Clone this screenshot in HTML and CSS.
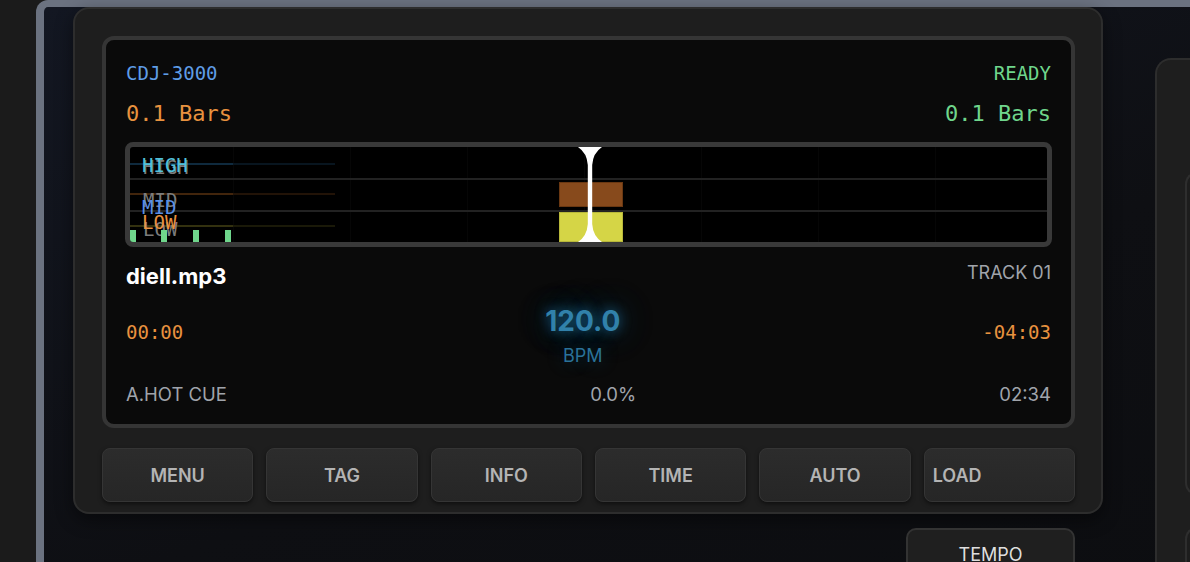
FILE: index.html
```html
<!DOCTYPE html>
<html lang="en">
<head>
<meta charset="utf-8">
<title>CDJ-3000 Deck</title>
<link rel="stylesheet" href="styles.css">
</head>
<body>
<div class="frame">
  <div class="deck-col">
    <div class="deck">
      <div class="screen">
        <div class="row top-row">
          <span class="model">CDJ-3000</span>
          <span class="status">READY</span>
        </div>
        <div class="row bars-row">
          <span class="bars-left">0.1 Bars</span>
          <span class="bars-right">0.1 Bars</span>
        </div>
        <div class="wave">
          <div class="grid"></div>
          <div class="band-line line-a"></div>
          <div class="band-line line-b"></div>
          <div class="trace trace-high"></div>
          <div class="trace trace-mid"></div>
          <div class="trace trace-low"></div>
          <span class="lbl ghost g-high">HIGH</span>
          <span class="lbl ghost g-mid">MID</span>
          <span class="lbl ghost g-low">LOW</span>
          <span class="lbl c-high">HIGH</span>
          <span class="lbl c-mid">MID</span>
          <span class="lbl c-low">LOW</span>
          <div class="marker m1"></div>
          <div class="marker m2"></div>
          <div class="marker m3"></div>
          <div class="marker m4"></div>
          <div class="block block-mid"></div>
          <div class="block block-low"></div>
          <svg class="playhead" width="26" height="95" viewBox="0 0 26 95">
            <path d="M1 0 H25 Q16 6 15.2 18 L15.2 77 Q16 89 25 95 H1 Q10 89 10.8 77 L10.8 18 Q10 6 1 0 Z" fill="#ffffff"/>
          </svg>
        </div>
        <div class="row track-row">
          <span class="track-name">diell.mp3</span>
          <span class="track-no">TRACK 01</span>
        </div>
        <div class="row time-row">
          <span class="elapsed">00:00</span>
          <div class="bpm">
            <div class="bpm-val">120.0</div>
            <div class="bpm-label">BPM</div>
          </div>
          <span class="remain">-04:03</span>
        </div>
        <div class="row info-row">
          <span>A.HOT CUE</span>
          <span>0.0%</span>
          <span>02:34</span>
        </div>
      </div>
      <div class="buttons">
        <button class="btn">MENU</button>
        <button class="btn">TAG</button>
        <button class="btn">INFO</button>
        <button class="btn">TIME</button>
        <button class="btn">AUTO</button>
        <button class="btn btn-left">LOAD</button>
      </div>
    </div>
    <div class="below">
      <div class="tempo">TEMPO</div>
    </div>
  </div>
  <div class="side">
    <div class="side-card card-1"></div>
    <div class="side-card card-2"></div>
  </div>
</div>
</body>
</html>
```
FILE: styles.css
```css
* { box-sizing: border-box; }
html, body { margin: 0; height: 100%; }
body {
  background: #1b1b1b;
  overflow: hidden;
  font-family: Inter, "Liberation Sans", sans-serif;
}
.frame {
  margin-left: 36px;
  width: 1300px;
  height: 620px;
  border-top: 7px solid #6b7280;
  border-left: 8px solid #6b7280;
  border-top-left-radius: 12px;
  background: linear-gradient(160deg, #131722 0%, #0e0f13 55%, #0c0d10 100%);
  display: flex;
  align-items: flex-start;
  padding-left: 29px;
}
.deck-col { width: 1030px; flex: none; }
.deck {
  border: 2px solid #2d2d2d;
  border-radius: 16px;
  background: #1e1e1e;
  padding: 27px 26px 10px 27px;
  box-shadow: 0 6px 18px rgba(0,0,0,0.45);
}
.screen {
  border: 4px solid #353535;
  border-radius: 12px;
  background: #0a0a0a;
  padding: 22px 20px 19px;
}
.row { display: flex; justify-content: space-between; }
.top-row {
  font-family: "DejaVu Sans Mono", "Liberation Mono", monospace;
  font-size: 19px;
  line-height: 22px;
}
.model { color: #5f9de6; }
.status { color: #6fd68c; }
.bars-row {
  margin-top: 17px;
  font-family: "DejaVu Sans Mono", "Liberation Mono", monospace;
  font-size: 22px;
  line-height: 26px;
}
.bars-left { color: #e8923f; }
.bars-right { color: #6fd68c; }

.wave {
  position: relative;
  margin: 15px -1px 0;
  height: 105px;
  border: 5px solid #393939;
  border-radius: 8px;
  background: #000;
  overflow: hidden;
}
.grid {
  position: absolute;
  inset: 0;
  background: repeating-linear-gradient(90deg, transparent 0, transparent 116px, #060606 116px, #060606 117px);
  background-position: -13px 0;
}
.band-line { position: absolute; left: 0; right: 0; height: 2px; background: #222; }
.line-a { top: 31px; }
.line-b { top: 63px; }
.trace { position: absolute; left: 0; width: 205px; height: 2px; }
.trace-high { top: 16px; background: linear-gradient(90deg, #0f2a3e 0, #0f2a3e 103px, #08151f 103px, #08151f 205px); }
.trace-mid { top: 46px; background: linear-gradient(90deg, #42250c 0, #42250c 103px, #221307 103px, #221307 205px); }
.trace-low { top: 78px; background: linear-gradient(90deg, #33310f 0, #33310f 103px, #1a1908 103px, #1a1908 205px); }
.lbl {
  position: absolute;
  left: 12px;
  font-family: "DejaVu Sans Mono", "Liberation Mono", monospace;
  font-size: 19px;
  line-height: 19px;
}
.ghost { color: #7c7c7c; left: 13px; }
.g-high { top: 11px; }
.g-mid { top: 44px; }
.g-low { top: 73px; }
.c-high { top: 9px; color: #52c0da; }
.c-mid { top: 51px; color: #5b8fe6; }
.c-low { top: 66px; color: #e8913f; }
.marker { position: absolute; bottom: 0; width: 6px; height: 12px; background: #6fd68c; }
.m1 { left: 0; }
.m2 { left: 31px; }
.m3 { left: 63px; }
.m4 { left: 95px; }
.block { position: absolute; left: calc(50% - 30px); width: 64px; }
.block-mid { top: 35px; height: 25px; background: #874a1c; box-shadow: inset 0 0 0 1px #6a3812; }
.block-low { top: 65px; height: 30px; background: #d5d546; box-shadow: inset 0 0 0 1px #b8b83a; }
.playhead { position: absolute; top: 0; left: calc(50% - 12px); }

.track-row { margin-top: 16px; align-items: flex-start; }
.track-name { color: #fff; font-weight: 700; font-size: 22px; line-height: 26px; }
.track-no { color: #a0a4ab; font-size: 18px; line-height: 19px; }

.time-row { margin-top: 15px; align-items: flex-start; }
.elapsed, .remain {
  margin-top: 17px;
  font-family: "DejaVu Sans Mono", "Liberation Mono", monospace;
  font-size: 19px;
  line-height: 22px;
  color: #e8923f;
}
.bpm { text-align: center; }
.bpm-val {
  font-weight: 700;
  font-size: 28px;
  line-height: 34px;
  color: #3181aa;
  text-shadow: 0 0 12px rgba(40,150,210,0.6), 0 0 28px rgba(40,150,210,0.45), 0 0 44px rgba(40,150,210,0.3);
}
.bpm-label {
  margin-top: 7px;
  font-size: 18px;
  line-height: 22px;
  color: #2a7299;
  text-shadow: 0 0 18px rgba(40,150,210,0.35);
}
.info-row {
  margin-top: 16px;
  font-size: 18.5px;
  line-height: 22px;
  color: #a0a4ab;
}

.buttons {
  margin-top: 20px;
  display: grid;
  grid-template-columns: repeat(6, 1fr);
  gap: 13px;
}
.btn {
  height: 54px;
  border: 1px solid #353535;
  border-radius: 8px;
  background: linear-gradient(180deg, #2c2c2c, #262626);
  box-shadow: 0 2px 4px rgba(0,0,0,0.5);
  color: #b4b4b4;
  font-family: Inter, "Liberation Sans", sans-serif;
  font-weight: 600;
  font-size: 18px;
  padding: 0;
  text-align: center;
}
.btn-left { text-align: left; padding-left: 8px; }

.below {
  display: flex;
  justify-content: flex-end;
  padding-right: 28px;
  margin-top: 14px;
}
.tempo {
  width: 169px;
  height: 60px;
  border: 2px solid #333;
  border-radius: 10px;
  background: #1f1f1f;
  color: #dedede;
  text-align: center;
  padding-top: 14px;
  font-size: 18px;
  line-height: 22px;
}

.side {
  flex: none;
  margin-left: 52px;
  margin-top: 51px;
  width: 200px;
  height: 620px;
  border: 2px solid #2d2d2d;
  border-right: none;
  border-radius: 16px 0 0 0;
  background: #1e1e1e;
  padding: 112px 0 0 28px;
  display: flex;
  flex-direction: column;
  gap: 32px;
}
.side-card {
  flex: none;
  border: 2px solid #2e2e2e;
  border-right: none;
  border-radius: 12px 0 0 12px;
  background: #1d1d1d;
}
.card-1 { height: 323px; }
.card-2 { height: 200px; }
```
